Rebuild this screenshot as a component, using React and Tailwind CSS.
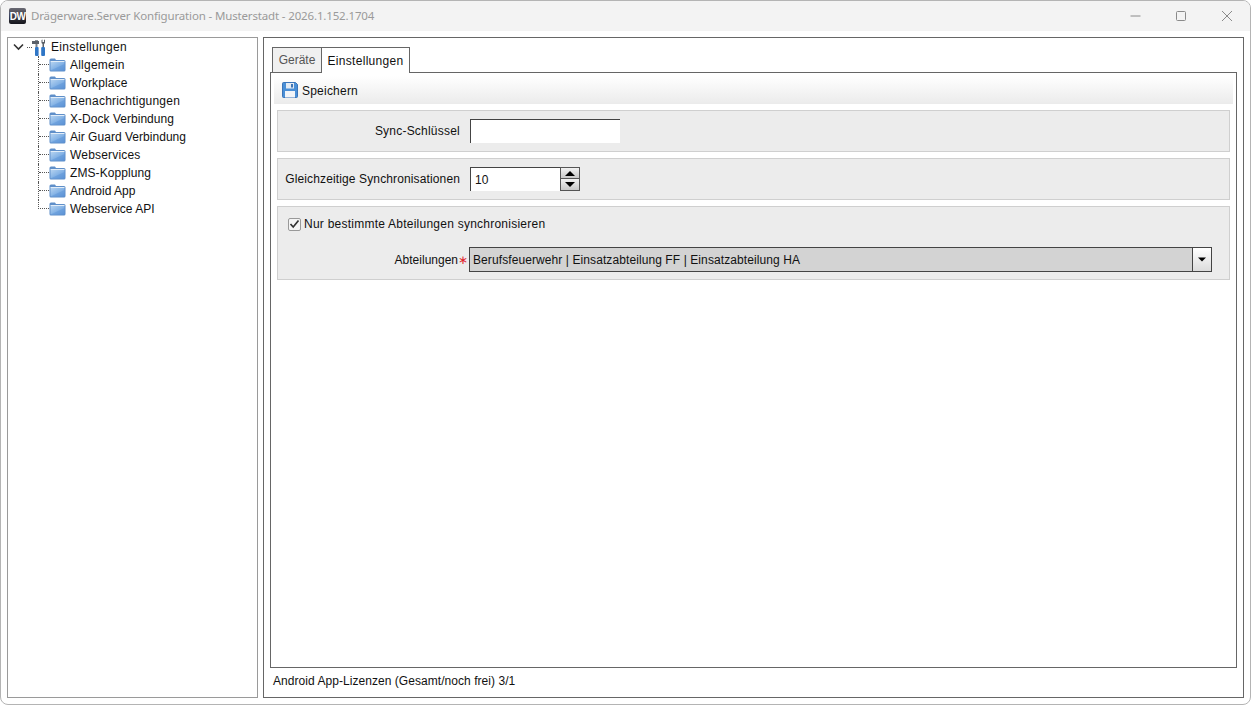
const font = { fontFamily: '"Liberation Sans", Arial, sans-serif' };

function Folder() {
  return (
    <svg width="17" height="14" viewBox="0 0 17 14" className="shrink-0">
      <defs>
        <linearGradient id="fb" x1="0" y1="0" x2="1" y2="1">
          <stop offset="0" stopColor="#b6d3f0" />
          <stop offset="0.5" stopColor="#86b4e6" />
          <stop offset="1" stopColor="#5a90d4" />
        </linearGradient>
      </defs>
      <path d="M0.5 2 Q0.5 0.5 2 0.5 H6 L7 2 H15 Q16.5 2 16.5 3.5 V12 Q16.5 13.5 15 13.5 H2 Q0.5 13.5 0.5 12 Z" fill="#5f8fc9" />
      <rect x="1.5" y="3" width="14" height="1" fill="#e2edf8" />
      <rect x="1.5" y="4" width="14" height="8.5" fill="url(#fb)" />
      <path d="M1.5 12.5 L15.5 6 V12.5 Z" fill="#5e95d8" opacity="0.5" />
    </svg>
  );
}

function Tools() {
  return (
    <svg width="14" height="17" viewBox="0 0 14 17" className="shrink-0">
      <rect x="0" y="2" width="7" height="3" fill="#5a6068" />
      <rect x="3" y="1" width="3" height="1" fill="#8a9098" />
      <rect x="3.5" y="5" width="2" height="3" fill="#7a8088" />
      <rect x="3" y="8" width="3.6" height="9" rx="1" fill="#2f76c6" />
      <path d="M9.5 1 V4 L10.5 5 V8 H12 V5 L13 4 V1 L12 0.5 V3 H10.5 V0.5 Z" fill="#5a6068" />
      <rect x="9.2" y="8" width="3.8" height="9" rx="1" fill="#2f76c6" />
    </svg>
  );
}

function Save() {
  return (
    <svg width="16" height="16" viewBox="0 0 16 16" className="shrink-0">
      <path d="M1.5 0.5 H13.5 L15.5 2.5 V14.5 Q15.5 15.5 14.5 15.5 H1.5 Q0.5 15.5 0.5 14.5 V1.5 Q0.5 0.5 1.5 0.5 Z" fill="#4a8fd6" stroke="#3a74b8" />
      <rect x="4" y="1" width="8" height="5.5" fill="#e4ebf3" />
      <rect x="9" y="2" width="2" height="3.5" fill="#3f74b4" />
      <rect x="3" y="9" width="10" height="6.5" fill="#f2f4f8" />
    </svg>
  );
}

function TreeRow({ label, last, track }) {
  return (
    <div className="flex h-[18px] items-center">
      <div className={`flex h-full w-[11px] shrink-0 flex-col ${last ? "" : "border-l border-dotted border-[#555]"}`}>
        <div className={`h-[9px] border-b border-dotted border-[#555] ${last ? "border-l" : ""}`} />
      </div>
      <Folder />
      <span className={`ml-[4px] whitespace-nowrap ${track}`}>{label}</span>
    </div>
  );
}

const items = [
  ["Allgemein", "tracking-[0.22px]"],
  ["Workplace", "tracking-[0.11px]"],
  ["Benachrichtigungen", "tracking-[0.22px]"],
  ["X-Dock Verbindung", "tracking-[0.03px]"],
  ["Air Guard Verbindung", "tracking-[0.03px]"],
  ["Webservices", "tracking-[0.18px]"],
  ["ZMS-Kopplung", "tracking-[0.08px]"],
  ["Android App", "tracking-normal"],
  ["Webservice API", "tracking-normal"],
];

function Group({ className, children }) {
  return <div className={`border border-[#cfcfcf] bg-[#ececec] ${className}`}>{children}</div>;
}

function Arrow({ up, w = 10 }) {
  return (
    <svg width={w} height="5" viewBox="0 0 10 5">
      <path d={up ? "M5 0 L10 5 H0 Z" : "M0 0 H10 L5 5 Z"} fill="#000" />
    </svg>
  );
}

export default function App() {
  return (
    <div style={font} className="flex h-[705px] w-[1251px] flex-col overflow-hidden rounded-[8px] border border-[#b4b4b4] bg-white text-[12px] text-[#111]">
      <div className="flex h-[30px] shrink-0 items-center bg-[#f3f3f3]">
        <div className="ml-[8px] flex h-[16px] w-[17px] items-center justify-center rounded-[2px] bg-gradient-to-b from-[#6a6a74] to-[#15151c] text-[10px] font-bold tracking-[-0.5px] text-white">DW</div>
        <span style={{ fontFamily: '"Noto Sans", sans-serif' }} className="ml-[5px] text-[11.5px] tracking-[-0.15px] text-[#9a9a9a]">Drägerware.Server Konfiguration - Musterstadt - 2026.1.152.1704</span>
        <div className="ml-auto flex items-center">
          <svg width="46" height="16" viewBox="0 0 46 16"><path d="M0 8 H10" transform="translate(11.5 0)" stroke="#8a8a8a" /></svg>
          <svg width="46" height="16" viewBox="0 0 46 16"><rect x="11.5" y="3.5" width="9" height="9" rx="1" fill="none" stroke="#8a8a8a" /></svg>
          <svg width="39" height="16" viewBox="0 0 39 16"><path d="M11 3 L21 13 M21 3 L11 13" fill="none" stroke="#8a8a8a" /></svg>
        </div>
      </div>
      <div className="flex min-h-0 flex-1 gap-[5px] p-[6px]">
        <div className="w-[251px] shrink-0 border border-[#9a9a9a] bg-white">
          <div className="flex h-[18px] items-center pl-[5px]">
            <svg width="11" height="8" viewBox="0 0 11 8" className="shrink-0"><path d="M1 1.5 L5.5 6 L10 1.5" fill="none" stroke="#333" strokeWidth="1.6" /></svg>
            <div className="ml-[3px] w-[5px] border-b border-dotted border-[#555]" />
            <Tools />
            <span className="ml-[5px] tracking-[0.3px]">Einstellungen</span>
          </div>
          <div className="ml-[30px]">
            {items.map(([t, tr], i) => <TreeRow key={t} label={t} track={tr} last={i === items.length - 1} />)}
          </div>
        </div>
        <div className="flex min-w-0 flex-1 flex-col border border-[#666] bg-white px-[6px]">
          <div className="flex h-[34px] shrink-0 items-end pl-[2px] pt-[9px]">
            <div className="flex h-[25px] w-[50px] items-center justify-center border border-b-0 border-[#666] bg-[#f0f0f0] text-[#555]">Geräte</div>
            <div className="relative z-10 -mb-px flex h-[26px] w-[88px] items-center justify-center border border-b-0 border-l-0 border-[#666] bg-white tracking-[0.3px]">Einstellungen</div>
          </div>
          <div className="flex h-[596px] shrink-0 flex-col border border-[#666] px-[3px] pt-[3px]">
            <div className="flex h-[28px] shrink-0 items-center gap-[4px] bg-gradient-to-b from-white to-[#ebebeb] pl-[8px]">
              <Save />
              <span className="pt-[2px] tracking-[0.22px]">Speichern</span>
            </div>
            <div className="flex flex-col gap-[6px] px-[3px] pt-[6px]">
              <Group className="flex h-[42px] items-center">
                <div className="w-[182px] text-right tracking-[0.22px]">Sync-Schlüssel</div>
                <div className="ml-[10px] h-[24px] w-[150px] border-l border-t border-[#444] bg-white" />
              </Group>
              <Group className="flex h-[42px] items-center">
                <div className="ml-[7px] w-[175px] whitespace-nowrap text-right tracking-[0.13px]">Gleichzeitige Synchronisationen</div>
                <div className="ml-[10px] flex h-[24px] w-[110px]">
                  <div className="flex flex-1 items-center border-l border-t border-[#444] bg-white pl-[4px]">10</div>
                  <div className="flex w-[20px] flex-col border border-[#555]">
                    <div className="flex h-[11px] items-center justify-center border-b border-[#555] bg-gradient-to-b from-[#f2f2f2] to-[#c8c8c8]"><Arrow up /></div>
                    <div className="flex flex-1 items-center justify-center bg-gradient-to-b from-[#f2f2f2] to-[#c8c8c8]"><Arrow /></div>
                  </div>
                </div>
              </Group>
              <Group className="flex h-[74px] flex-col">
                <div className="flex h-[34px] items-center pl-[10px]">
                  <div className="flex h-[13px] w-[13px] items-center justify-center rounded-[2px] border border-[#999] bg-[#f4f4f4]">
                    <svg width="11" height="10" viewBox="0 0 11 10"><path d="M1.5 5 L4.2 8 L9.5 1.5" fill="none" stroke="#333" strokeWidth="1.7" /></svg>
                  </div>
                  <span className="ml-[3px] tracking-[0.24px]">Nur bestimmte Abteilungen synchronisieren</span>
                </div>
                <div className="mt-[6px] flex items-center">
                  <div className="flex w-[190px] items-center justify-end whitespace-nowrap">
                    <span>Abteilungen</span>
                    <span className="text-[#e0202a]">∗</span>
                  </div>
                  <div className="ml-[1px] flex h-[25px] w-[743px] border border-[#444] bg-[#d3d3d3]">
                    <div className="flex flex-1 items-center pl-[3px] tracking-[0.09px]">Berufsfeuerwehr | Einsatzabteilung FF | Einsatzabteilung HA</div>
                    <div className="flex w-[19px] items-center justify-center border-l border-[#444] bg-gradient-to-b from-white to-[#dcdcdc]"><Arrow w={8} /></div>
                  </div>
                </div>
              </Group>
            </div>
          </div>
          <div className="flex flex-1 items-center pb-[4px] pl-[3px] tracking-[0.05px]">Android App-Lizenzen (Gesamt/noch frei) 3/1</div>
        </div>
      </div>
    </div>
  );
}
